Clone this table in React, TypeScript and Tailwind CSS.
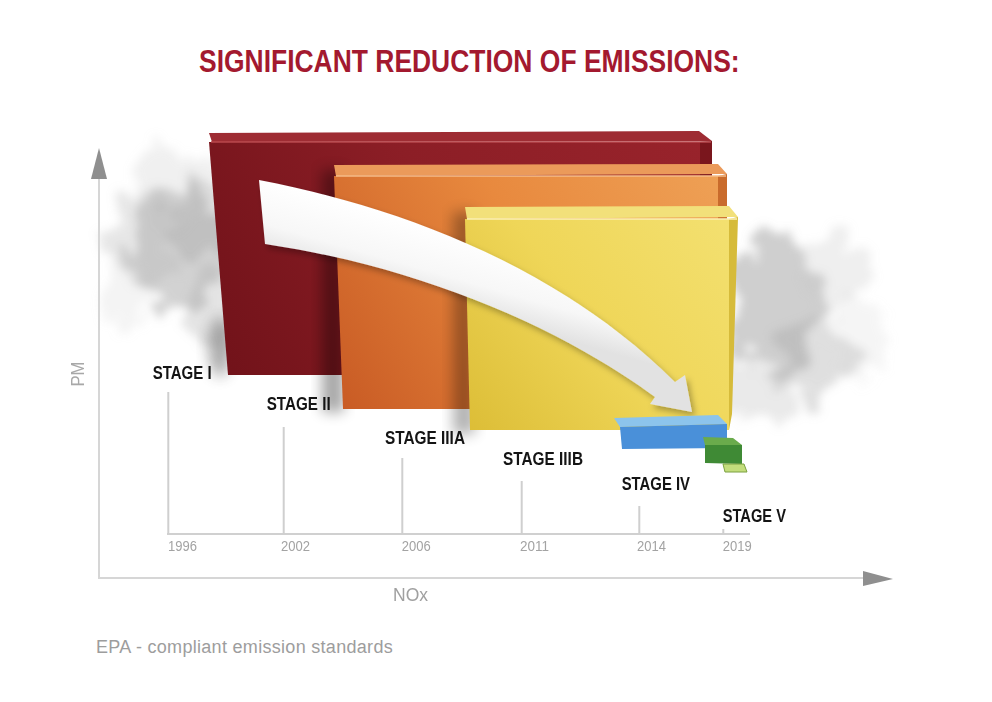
const stages = [
  { label: 'STAGE I', x: 152.7, y: 377, w: 59, year: '1996', yearX: 168, stemX: 168.3, stemTop: 390 },
  { label: 'STAGE II', x: 266.7, y: 408, w: 64, year: '2002', yearX: 281, stemX: 283.7, stemTop: 425 },
  { label: 'STAGE IIIA', x: 385, y: 442, w: 80, year: '2006', yearX: 401.7, stemX: 402.3, stemTop: 456 },
  { label: 'STAGE IIIB', x: 503, y: 463, w: 80, year: '2011', yearX: 520, stemX: 521.7, stemTop: 479 },
  { label: 'STAGE IV', x: 621.7, y: 488, w: 68.3, year: '2014', yearX: 637, stemX: 639.3, stemTop: 504 },
  { label: 'STAGE V', x: 722.7, y: 520, w: 63.3, year: '2019', yearX: 722.7, stemX: 723.3, stemTop: 527 },
];

const font = "'Liberation Sans', Arial, sans-serif";

// smoke blobs, drawn behind the bars
const smoke = [
  { cx: 180, cy: 245, rx: 50, ry: 60, fill: '#8a8a8a', o: 0.38 },
  { cx: 210, cy: 215, rx: 40, ry: 40, fill: '#999999', o: 0.32 },
  { cx: 145, cy: 235, rx: 35, ry: 50, fill: '#b0b0b0', o: 0.3 },
  { cx: 170, cy: 180, rx: 45, ry: 28, fill: '#c2c2c2', o: 0.25 },
  { cx: 215, cy: 305, rx: 32, ry: 42, fill: '#a5a5a5', o: 0.3 },
  { cx: 125, cy: 290, rx: 25, ry: 30, fill: '#cccccc', o: 0.22 },
  { cx: 775, cy: 300, rx: 48, ry: 70, fill: '#8c8c8c', o: 0.42 },
  { cx: 815, cy: 355, rx: 40, ry: 40, fill: '#a0a0a0', o: 0.34 },
  { cx: 760, cy: 390, rx: 35, ry: 30, fill: '#b5b5b5', o: 0.28 },
  { cx: 835, cy: 270, rx: 32, ry: 36, fill: '#c0c0c0', o: 0.25 },
  { cx: 860, cy: 335, rx: 28, ry: 45, fill: '#d0d0d0', o: 0.22 },
];

function EmissionsChart() {
  return (
    <svg width={992} height={500} viewBox="0 110 992 500" className="block">
      <defs>
        <filter id="smoke" x="-50%" y="-50%" width="200%" height="200%">
          <feTurbulence type="fractalNoise" baseFrequency="0.035" numOctaves={5} seed={7} result="noise" />
          <feDisplacementMap in="SourceGraphic" in2="noise" scale={60} xChannelSelector="R" yChannelSelector="G" result="disp" />
          <feGaussianBlur in="disp" stdDeviation={5} />
        </filter>
        <filter id="soft" x="-50%" y="-50%" width="200%" height="200%">
          <feGaussianBlur stdDeviation={7} />
        </filter>
        <filter id="arrowShadow" x="-20%" y="-20%" width="140%" height="140%">
          <feDropShadow dx={3} dy={4} stdDeviation={3} floodColor="#000" floodOpacity={0.3} />
        </filter>
        <linearGradient id="redFront" gradientUnits="userSpaceOnUse" x1={700} y1={140} x2={209} y2={373}>
          <stop offset="0" stopColor="#98232b" />
          <stop offset="0.5" stopColor="#8c1e26" />
          <stop offset="1" stopColor="#701219" />
        </linearGradient>
        <linearGradient id="orangeFront" gradientUnits="userSpaceOnUse" x1={718} y1={174} x2={334} y2={407}>
          <stop offset="0" stopColor="#eea055" />
          <stop offset="0.45" stopColor="#e8893e" />
          <stop offset="1" stopColor="#c85a24" />
        </linearGradient>
        <linearGradient id="yellowFront" gradientUnits="userSpaceOnUse" x1={729} y1={217} x2={465} y2={428}>
          <stop offset="0" stopColor="#f3e070" />
          <stop offset="0.5" stopColor="#efd658" />
          <stop offset="1" stopColor="#dcbd36" />
        </linearGradient>
        <linearGradient id="arrowFill" gradientUnits="userSpaceOnUse" x1={470} y1={235} x2={450} y2={305}>
          <stop offset="0" stopColor="#ffffff" />
          <stop offset="0.6" stopColor="#f7f7f7" />
          <stop offset="1" stopColor="#e2e2e2" />
        </linearGradient>
      </defs>

      {/* smoke clouds */}
      <g filter="url(#smoke)">
        {smoke.map((s, i) => (
          <ellipse key={i} cx={s.cx} cy={s.cy} rx={s.rx} ry={s.ry} fill={s.fill} opacity={s.o} />
        ))}
      </g>

      {/* axes */}
      <line x1={99} y1={176} x2={99} y2={577} stroke="#d6d6d6" strokeWidth={2} />
      <polygon points="99,146 107,177 91,177" fill="#8f8f8f" />
      <line x1={98} y1={576} x2={864} y2={576} stroke="#d6d6d6" strokeWidth={2} />
      <polygon points="863,569 893,577 863,584" fill="#8f8f8f" />

      {/* red box */}
      <ellipse cx={220} cy={345} rx={12} ry={30} fill="#555" opacity={0.45} filter="url(#soft)" />
      <polygon points="209,131 699,129 712,139 212,140" fill="#9e2c33" />
      <polygon points="209,140 700,140 700,373 228,373" fill="url(#redFront)" />
      <polygon points="700,140 712,139 712,370 700,373" fill="#7a161d" />
      <line x1={211} y1={140} x2={711} y2={140} stroke="#b9474d" strokeWidth={1.5} />

      {/* orange box */}
      <rect x={322} y={168} width={22} height={242} fill="#000" opacity={0.35} filter="url(#soft)" />
      <polygon points="334,163 718,162 727,172 336,174" fill="#eb9a5a" />
      <polygon points="334,174 718,174 718,407 343,407" fill="url(#orangeFront)" />
      <polygon points="718,174 727,172 727,405 718,407" fill="#c96b2c" />
      <line x1={336} y1={174} x2={726} y2={174} stroke="#f6bd88" strokeWidth={1.5} />

      {/* yellow box */}
      <rect x={453} y={210} width={22} height={222} fill="#000" opacity={0.3} filter="url(#soft)" />
      <polygon points="465,205 729,204 738,215 467,217" fill="#f2e07a" />
      <polygon points="465,217 729,217 729,428 470,428" fill="url(#yellowFront)" />
      <polygon points="729,217 738,215 732,412 729,428" fill="#d6bb3a" />
      <line x1={467} y1={217} x2={737} y2={217} stroke="#fbf0b4" strokeWidth={1.5} />

      {/* white arrow */}
      <path
        d="M 259 178 C 400 205, 560 265, 675 380 L 685 373 L 692 410 L 650 402 L 655 395 C 560 325, 420 265, 265 242 Z"
        fill="url(#arrowFill)"
        filter="url(#arrowShadow)"
      />

      {/* blue box */}
      <polygon points="614,416 718,413 727,422 620,425" fill="#8cc4ec" />
      <polygon points="620,425 727,422 727,446 622,447" fill="#4a90d9" />

      {/* green box */}
      <polygon points="703,435 733,436 742,443 705,443" fill="#6aab4c" />
      <polygon points="705,443 742,443 742,462 705,461" fill="#3f8a35" />
      <polygon points="723,462 744,462 747,470 725,470" fill="#c3dd7c" stroke="#7aa040" strokeWidth={1} />

      {/* timeline */}
      <line x1={167} y1={532} x2={750} y2={532} stroke="#d0d0d0" strokeWidth={2} />
      {stages.map((s) => (
        <g key={s.label}>
          <line x1={s.stemX} y1={s.stemTop} x2={s.stemX} y2={532} stroke="#cfcfcf" strokeWidth={2} />
          <text
            x={s.x}
            y={s.y}
            fontFamily={font}
            fontWeight={700}
            fontSize={18}
            fill="#141414"
            textLength={s.w}
            lengthAdjust="spacingAndGlyphs"
          >
            {s.label}
          </text>
          <text
            x={s.yearX}
            y={549}
            fontFamily={font}
            fontSize={14}
            fill="#a3a3a3"
            textLength={29}
            lengthAdjust="spacingAndGlyphs"
          >
            {s.year}
          </text>
        </g>
      ))}

      {/* axis labels */}
      <text
        x={78}
        y={378.4}
        transform="rotate(-90 78 372)"
        textAnchor="middle"
        fontFamily={font}
        fontSize={18}
        fill="#a8a8a8"
        textLength={25}
        lengthAdjust="spacingAndGlyphs"
      >
        PM
      </text>
      <text x={393} y={599} fontFamily={font} fontSize={17.6} fill="#a0a0a0" textLength={35} lengthAdjust="spacingAndGlyphs">
        NOx
      </text>
    </svg>
  );
}

export default function App() {
  return (
    <div className="w-[992px] h-[702px] bg-white overflow-hidden font-['Liberation_Sans',Arial,sans-serif]">
      <div className="pt-[46px] pl-[199px]">
        <h1 className="inline-block origin-left scale-x-[0.853] whitespace-nowrap text-[31px] leading-[31px] font-bold text-[#a3192f]">
          SIGNIFICANT REDUCTION OF EMISSIONS:
        </h1>
      </div>
      <div className="mt-[33px]">
        <EmissionsChart />
      </div>
      <p className="mt-[26px] pl-[96px] text-[18px] leading-[18px] tracking-[0.3px] text-[#9d9d9d]">
        EPA - compliant emission standards
      </p>
    </div>
  );
}
